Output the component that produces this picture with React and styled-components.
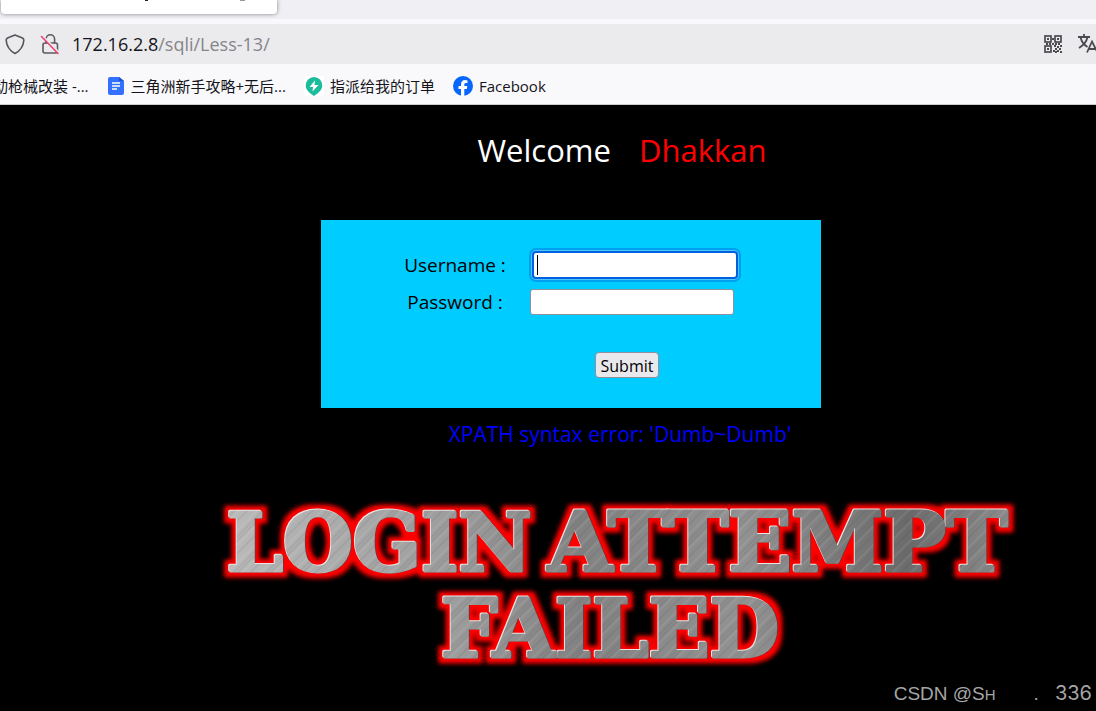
import React from 'react';
import styled, { createGlobalStyle } from 'styled-components';

const GlobalStyle = createGlobalStyle`
  * {
    box-sizing: border-box;
  }

  body {
    margin: 0;
    background: #000;
    font-family: 'Open Sans', 'Noto Sans CJK SC', sans-serif;
  }
`;

const Window = styled.div`
  display: flex;
  flex-direction: column;
  min-height: 100vh;
`;

const TabStrip = styled.div`
  height: 19px;
  padding-left: 1px;
  background: #f0eff4;
`;

const Tab = styled.div`
  width: 276px;
  height: 14px;
  background:
    linear-gradient(#222, #222) 144px 0 / 3px 1px no-repeat,
    linear-gradient(#999, #999) 239px 0 / 5px 1px no-repeat,
    #fff;
  border-radius: 0 0 4px 4px;
  box-shadow: 0 0 4px rgba(0, 0, 0, 0.45);
`;

const AddressBar = styled.div`
  display: flex;
  align-items: center;
  justify-content: space-between;
  height: 45px;
  padding-left: 4px;
  background: #ebebed;
  border-top: 5px solid #f9f9fb;
`;

const Group = styled.div`
  display: flex;
  align-items: center;
  gap: ${(props) => props.$gap};
`;

const Url = styled.span`
  font-size: 18px;
  line-height: 24px;
  color: #15141a;
`;

const Path = styled.span`
  color: #85858a;
`;

const Bookmarks = styled.nav`
  display: flex;
  align-items: center;
  gap: 18px;
  height: 41px;
  padding-top: 4px;
  overflow: hidden;
  background: #f9f9fb;
  border-bottom: 1px solid #ccccd0;
`;

const Bookmark = styled.a`
  display: flex;
  align-items: center;
  flex: none;
  gap: 6px;
  font-size: 15px;
  line-height: 20px;
  color: #15141a;
  text-decoration: none;

  &:first-child {
    margin-left: -7px;
  }
`;

const Page = styled.main`
  display: flex;
  flex-direction: column;
  align-items: center;
  flex: 1;
  padding: 24px 0 0 144px;
  background: #000;
`;

const Welcome = styled.h1`
  display: flex;
  gap: 28px;
  margin: 0;
  padding-left: 4px;
  font-size: 31px;
  font-weight: 400;
  line-height: 42px;
  color: #fff;
`;

const UserName = styled.span`
  color: #f00;
`;

const LoginForm = styled.form`
  display: flex;
  flex-direction: column;
  align-items: center;
  width: 500px;
  height: 188px;
  margin: 49px 98px 0 0;
  padding-top: 26px;
  background: #0cf;
`;

const Field = styled.div`
  display: grid;
  grid-template-columns: 118px 216px;
  align-items: center;
  height: 37px;
  gap: 16px;
`;

const Label = styled.label`
  font-size: 19px;
  line-height: 28px;
  text-align: center;
  color: #000;
`;

const Input = styled.input`
  width: 204px;
  height: 26px;
  padding: 0 4px;
  font: 16px 'Open Sans', sans-serif;
  background: #fff;
  border: 1px solid #8f8f9d;
  border-radius: 3px;
  outline: none;

  &:focus {
    width: 206px;
    height: 28px;
    margin-left: 2px;
    border: 2px solid #0061e0;
    border-radius: 4px;
    box-shadow: 0 0 0 1px #4cc4fb, 0 0 0 3px #00a0f0;
  }

  /* steady caret while the box is empty */
  &:focus:placeholder-shown {
    caret-color: transparent;
    background: linear-gradient(#000, #000) 3px center / 1px 20px no-repeat #fff;
  }
`;

const Submit = styled.button`
  height: 26px;
  margin: 32px 0 0 112px;
  padding: 1px 5px 0;
  font: 16px 'Open Sans', sans-serif;
  line-height: 24px;
  color: #000;
  background: #e9e9ed;
  border: 1px solid #8f8f9d;
  border-radius: 4px;
`;

const ErrorText = styled.p`
  margin: 11px 0 0;
  font-size: 21px;
  line-height: 30px;
  color: #00f;
`;

const Banner = styled.svg`
  display: block;
  flex: none;
  width: 820px;
  height: 180px;
  margin-top: 41px;
`;

const Watermark = styled.footer`
  display: flex;
  align-self: flex-end;
  align-items: baseline;
  margin: auto 4px 4px 0;
  font: 19px 'Liberation Sans', sans-serif;
  line-height: 24px;
  color: #a6a6a6;
`;

const SmallCap = styled.span`
  margin-right: 38px;
  font-size: 15px;
`;

const Digits = styled.span`
  margin-left: 16px;
  font-family: Inter, sans-serif;
  font-size: 20px;
`;

const ShieldIcon = () => (
  <svg width="22" height="22" viewBox="0 0 22 22" fill="none" stroke="#55555c" strokeWidth="1.6" strokeLinejoin="round">
    <path d="M11 2 L18.5 5 Q20 5.700 19.800 7.500 C19.300 13.500 16.500 17.500 11 20.500 C5.500 17.500 2.700 13.500 2.200 7.500 Q2 5.700 3.500 5 Z" />
  </svg>
);

const InsecureIcon = () => (
  <svg width="22" height="22" viewBox="0 0 22 22" fill="none" strokeWidth="1.6" strokeLinecap="round">
    <path d="M8 10 V6 A4.300 4.300 0 0 1 16.600 6 V10" stroke="#5b5b62" />
    <rect x="5" y="10" width="14.500" height="10" rx="2" stroke="#5b5b62" />
    <path d="M5 3.500 L21 19.500" stroke="#ebebed" strokeWidth="2" />
    <path d="M3.500 3.500 L20 20.500" stroke="#e9426e" />
  </svg>
);

const finders = [[0, 0], [10, 0], [0, 10]];
const qrDots = [
  [8, 3], [8, 8], [2, 8], [5, 8], [14, 8], [11, 8], [16, 10],
  [10, 10], [13, 11], [11, 13], [15, 13], [9, 15], [13, 15], [16, 16], [11, 16],
];

const QrIcon = () => (
  <svg width="18" height="18" viewBox="0 0 18 18" fill="#4a4a51">
    {finders.map(([x, y]) => (
      <g key={`${x}-${y}`}>
        <rect x={x + 1} y={y + 1} width="6" height="6" fill="none" stroke="#4a4a51" strokeWidth="1.7" />
        <rect x={x + 3} y={y + 3} width="2" height="2" />
      </g>
    ))}
    {qrDots.map(([x, y]) => (
      <rect key={`${x}-${y}`} x={x} y={y} width="2" height="2" />
    ))}
  </svg>
);

const TranslateIcon = () => (
  <svg width="19" height="22" viewBox="0 0 19 22" fill="none" stroke="#4a4a51" strokeWidth="1.8">
    <path d="M1 4 H13 M7 1 V4 M3.500 4 C4.500 9 8 12.500 10.500 14 M10.500 4 C9.500 9 6 12.500 2 15" />
    <path d="M10 19.500 L15 8.500 L20.500 19.500 M12 16 H19" />
  </svg>
);

const DocIcon = () => (
  <svg width="18" height="18" viewBox="0 0 18 18">
    <path d="M3 0 H12 L17 4 V16 Q17 18 15 18 H3 Q1 18 1 16 V2 Q1 0 3 0 Z" fill="#3370ff" />
    <path d="M12 0 L17 4 H12 Z" fill="#1f4fd0" />
    <path d="M5 6 H13 M5 9 H13 M5 12 H10" stroke="#fff" strokeWidth="1.4" />
  </svg>
);

const BoltIcon = () => (
  <svg width="20" height="20" viewBox="0 0 20 20">
    <path fill="#fff" d="M0 0 H20 V20 H0 Z" />
    <path d="M10 1 A8.300 8.300 0 0 1 18.300 9.500 C18.300 14 14.500 17 10 20 C5.500 17 1.700 14 1.700 9.500 A8.300 8.300 0 0 1 10 1 Z" fill="#1abc9c" />
    <path d="M11 4.500 L5.500 11 H9 L8.500 15.500 L14.500 9 H10.500 Z" fill="#fff" />
  </svg>
);

const FacebookIcon = () => (
  <svg width="20" height="20" viewBox="0 0 20 20">
    <circle cx="10" cy="10" r="10" fill="#0866ff" />
    <path d="M8 20 V13 H5.500 V10 H8 V8.500 C8 5.500 9.500 4 12 4 Q13.500 4 14.500 4.400 V7 H13 C11.500 7 11.300 7.800 11.300 8.800 V10 H14.300 L13.800 13 H11.300 V20 Z" fill="#fff" />
  </svg>
);

const bannerWords = [
  { text: 'LOGIN', x: 17, y: 81, size: 80 },
  { text: 'ATTEMPT', x: 338, y: 81, size: 83 },
  { text: 'FAILED', x: 231, y: 167, size: 80 },
];

const FailedBanner = () => (
  <Banner viewBox="0 0 820 180">
    <defs>
      <linearGradient id="base" x1="0" y1="0" x2="1" y2="0">
        <stop offset="0" stopColor="#bcbcbc" />
        <stop offset="0.3" stopColor="#9c9c9c" />
        <stop offset="0.45" stopColor="#828282" />
        <stop offset="0.65" stopColor="#929292" />
        <stop offset="0.85" stopColor="#6c6c6c" />
        <stop offset="1" stopColor="#929292" />
      </linearGradient>
      <pattern id="brush" width="17" height="23" patternUnits="userSpaceOnUse" patternTransform="rotate(-45)">
        <path d="M0 2 H17 M0 12 H17" stroke="#fff" strokeOpacity="0.14" />
        <path d="M0 6 H17 M0 9 H17 M0 18 H17" stroke="#222" strokeOpacity="0.14" />
      </pattern>
      <pattern id="metal" width="820" height="180" patternUnits="userSpaceOnUse">
        <rect width="820" height="180" fill="url(#base)" />
        <rect width="820" height="180" fill="url(#brush)" />
      </pattern>
      <filter id="glow" filterUnits="userSpaceOnUse" x="0" y="0" width="820" height="180" colorInterpolationFilters="sRGB">
        <feMorphology in="SourceAlpha" operator="dilate" radius="5" result="wide" />
        <feGaussianBlur in="wide" stdDeviation="2" result="soft" />
        <feFlood floodColor="#f00" />
        <feComposite in2="soft" operator="in" result="red" />
        <feOffset in="SourceAlpha" dx="-1" dy="-1" result="upper" />
        <feFlood floodColor="#e6e6e6" />
        <feComposite in2="upper" operator="in" result="light" />
        <feOffset in="SourceAlpha" dx="1" dy="0" result="lower" />
        <feFlood floodColor="#803030" />
        <feComposite in2="lower" operator="in" result="dark" />
        <feMerge>
          <feMergeNode in="red" />
          <feMergeNode in="dark" />
          <feMergeNode in="light" />
          <feMergeNode in="SourceGraphic" />
        </feMerge>
      </filter>
    </defs>
    <g
      fontFamily="DejaVu Serif"
      fontWeight="700"
      fill="url(#metal)"
      stroke="url(#metal)"
      strokeWidth="3"
      strokeLinejoin="round"
      filter="url(#glow)"
    >
      {bannerWords.map((word) => (
        <text key={word.text} x={word.x} y={word.y} fontSize={word.size}>{word.text}</text>
      ))}
    </g>
  </Banner>
);

const App = () => {
  return (
    <Window>
      <GlobalStyle />
      <TabStrip>
        <Tab />
      </TabStrip>
      <AddressBar>
        <Group $gap="12px">
          <ShieldIcon />
          <InsecureIcon />
          <Url>172.16.2.8<Path>/sqli/Less-13/</Path></Url>
        </Group>
        <Group $gap="15px">
          <QrIcon />
          <TranslateIcon />
        </Group>
      </AddressBar>
      <Bookmarks>
        <Bookmark href="#">动枪械改装 -...</Bookmark>
        <Bookmark href="#"><DocIcon />三角洲新手攻略+无后...</Bookmark>
        <Bookmark href="#"><BoltIcon />指派给我的订单</Bookmark>
        <Bookmark href="#"><FacebookIcon />Facebook</Bookmark>
      </Bookmarks>
      <Page>
        <Welcome>
          <span>Welcome</span>
          <UserName>Dhakkan</UserName>
        </Welcome>
        <LoginForm onSubmit={(e) => e.preventDefault()}>
          <Field>
            <Label htmlFor="uname">Username :</Label>
            <Input id="uname" name="uname" type="text" placeholder=" " autoFocus />
          </Field>
          <Field>
            <Label htmlFor="passwd">Password :</Label>
            <Input id="passwd" name="passwd" type="password" />
          </Field>
          <Submit type="submit">Submit</Submit>
        </LoginForm>
        <ErrorText>XPATH syntax error: 'Dumb~Dumb'</ErrorText>
        <FailedBanner />
        <Watermark>
          CSDN @S<SmallCap>H</SmallCap>.<Digits>336</Digits>
        </Watermark>
      </Page>
    </Window>
  );
};

export default App;
